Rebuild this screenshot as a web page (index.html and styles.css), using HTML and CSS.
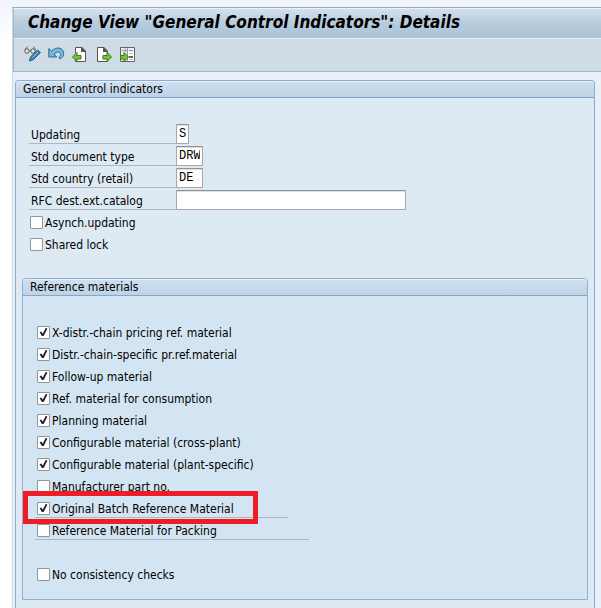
FILE: index.html
```html
<!DOCTYPE html>
<html lang="en">
<head>
    <meta charset="UTF-8">
    <meta name="viewport" content="width=device-width, initial-scale=1.0">
    <title>Change View "General Control Indicators": Details</title>
    <link rel="stylesheet" href="styles.css">
</head>
<body>
    <div class="window">
        <header class="titlebar">
            <h1>Change View "General Control Indicators": Details</h1>
        </header>
        <div class="toolbar">
            <button type="button" class="tool" aria-label="Display / Change">
                <svg width="18" height="18" viewBox="0 0 18 18" fill="none">
                    <path d="M1 4.500L3.500 1.500M5.500 5.500h1.500M11.500 4.500L9.500 1.500" stroke="#666"/>
                    <circle cx="3" cy="6" r="2.200" fill="#e4ebf0" stroke="#555"/>
                    <circle cx="9" cy="6" r="2.200" fill="#e4ebf0" stroke="#555"/>
                    <path d="M5.500 16l1-4L13.500 5l3 2.500-7 7z" fill="#3f87b5" stroke="#235e88"/>
                    <path d="M8.500 12.500l5.500-5.500" stroke="#8fc4e2"/>
                </svg>
            </button>
            <button type="button" class="tool" aria-label="Undo">
                <svg width="18" height="18" viewBox="0 0 18 18" fill="none">
                    <path d="M.8 3.500v8.500h8L6 9C8.500 6 12.500 6.500 12.500 9.500c0 1.500-.8 2.500-1.800 3.500l2 .5c2-1.200 3-2.500 3-4.800C15.700 2.500 8.500 1 3.500 6z" fill="#79b6d8" stroke="#286b96"/>
                </svg>
            </button>
            <button type="button" class="tool" aria-label="Previous entry">
                <svg width="18" height="18" viewBox="0 0 18 18">
                    <path d="M3.500 8V2.500h6l4 4v10h-10V14" fill="#fff" stroke="#555"/>
                    <path d="M9 2h1l4 4v1H9z" fill="#555"/>
                    <path d="M.5 12L5 7.500v3h4v3.500H5v2.500z" fill="#80be2c" stroke="#3d762b"/>
                </svg>
            </button>
            <button type="button" class="tool" aria-label="Next entry">
                <svg width="18" height="18" viewBox="0 0 18 18">
                    <path d="M1.500 2.500h6l4 4v10h-10z" fill="#fff" stroke="#555"/>
                    <path d="M7 2h1l4 4v1H7z" fill="#555"/>
                    <path d="M15.500 12L11 7.500v3H7v3.500h4v2.500z" fill="#80be2c" stroke="#3d762b"/>
                </svg>
            </button>
            <button type="button" class="tool" aria-label="Other entry">
                <svg width="18" height="18" viewBox="0 0 18 18" fill="none">
                    <path d="M.5 2.500h14v14H.5z" fill="#e9eef1" stroke="#666"/>
                    <path d="M8 7h6v9H8z" fill="#fff"/>
                    <path d="M2 5.500h4M4.500 3.500l2 2-2 2M9 5.500h4M7.500 3v13" stroke="#999"/>
                    <path d="M9 8.500h4M9 14.500h4" stroke="#bbb"/>
                    <path d="M9 12h4" stroke="#398043" stroke-width="2"/>
                    <path d="M8.500 12L4 7.500v3H.5v3.500H4v2.500z" fill="#80be2c" stroke="#3d762b"/>
                </svg>
            </button>
        </div>

        <main>
            <form class="group">
                <h2 class="group-title">General control indicators</h2>
                <div class="group-body">
                    <div class="field">
                        <label for="updating">Updating</label>
                        <input type="text" id="updating" class="len-1" value="S">
                    </div>
                    <div class="field">
                        <label for="doctype">Std document type</label>
                        <input type="text" id="doctype" class="len-3" value="DRW">
                    </div>
                    <div class="field">
                        <label for="country">Std country (retail)</label>
                        <input type="text" id="country" class="len-3" value="DE">
                    </div>
                    <div class="field">
                        <label for="rfc">RFC dest.ext.catalog</label>
                        <input type="text" id="rfc" class="len-32">
                    </div>
                    <div class="check"><input type="checkbox" id="asynch"><label for="asynch">Asynch.updating</label></div>
                    <div class="check"><input type="checkbox" id="lock"><label for="lock">Shared lock</label></div>

                    <section class="group subgroup">
                        <h2 class="group-title">Reference materials</h2>
                        <div class="group-body">
                            <div class="check"><input type="checkbox" id="m1" checked><label for="m1">X-distr.-chain pricing ref. material</label></div>
                            <div class="check"><input type="checkbox" id="m2" checked><label for="m2">Distr.-chain-specific pr.ref.material</label></div>
                            <div class="check"><input type="checkbox" id="m3" checked><label for="m3">Follow-up material</label></div>
                            <div class="check"><input type="checkbox" id="m4" checked><label for="m4">Ref. material for consumption</label></div>
                            <div class="check"><input type="checkbox" id="m5" checked><label for="m5">Planning material</label></div>
                            <div class="check"><input type="checkbox" id="m6" checked><label for="m6">Configurable material (cross-plant)</label></div>
                            <div class="check"><input type="checkbox" id="m7" checked><label for="m7">Configurable material (plant-specific)</label></div>
                            <div class="check"><input type="checkbox" id="m8"><label for="m8">Manufacturer part no.</label></div>
                            <div class="check lined marked"><input type="checkbox" id="m9" checked><label for="m9">Original Batch Reference Material</label></div>
                            <div class="check lined lined-long"><input type="checkbox" id="m10"><label for="m10">Reference Material for Packing</label></div>
                            <div class="check spaced"><input type="checkbox" id="m11"><label for="m11">No consistency checks</label></div>
                        </div>
                    </section>
                </div>
            </form>
        </main>
    </div>
</body>
</html>
```
FILE: styles.css
```css
*,
*::before,
*::after {
    box-sizing: border-box;
}
body {
    margin: 0;
    padding: 7px 0 0 12px;
    min-height: 100vh;
    display: flex;
    background: linear-gradient(#f0f4fb, #fff 40px);
    font-family: Tahoma, "DejaVu Sans Condensed", "DejaVu Sans", sans-serif;
    font-stretch: condensed;
    font-size: 12px;
    color: #000;
}
.window {
    flex: 1;
    display: flex;
    flex-direction: column;
    background: #e8eff6;
    border-top: 1px solid #98a9c0;
    border-left: 1px solid #ccd8e2;
}
.titlebar {
    height: 31px;
    padding: 0 14px;
    display: flex;
    align-items: center;
    background: linear-gradient(#d3e1ed, #b6cbdc 50%, #abc3da);
    border-top: 1px solid #eaf1f7;
    border-bottom: 1px solid #e6eef5;
    border-left: 1px solid #a0b5ca;
}
h1 {
    margin: 0;
    padding-bottom: 4px;
    font-size: 17px;
    font-style: italic;
    font-weight: bold;
    white-space: nowrap;
}
.toolbar {
    height: 33px;
    padding: 0 10px 3px;
    display: flex;
    align-items: center;
    gap: 6px;
    background: #cfdce6;
    border-bottom: 1px solid #a3b6c8;
    border-left: 1px solid #a0b5ca;
}
.tool {
    width: 18px;
    height: 18px;
    padding: 0;
    border: 0;
    background: none;
    cursor: pointer;
}
.tool svg {
    display: block;
}
main {
    flex: 1;
    display: flex;
    padding: 8px 6px 0 2px;
}
.group {
    flex: 1;
    margin: 0;
    background: #deeaf3;
    border: 1px solid #8aaccd;
    border-bottom: 0;
    border-radius: 4px 4px 0 0;
}
.group-title {
    margin: 0;
    height: 17px;
    padding-left: 7px;
    font-size: 12px;
    font-weight: normal;
    line-height: 15px;
    background: linear-gradient(#cfdfee, #bdd3e8);
    border-top: 1px solid #e6f0f9;
    border-bottom: 1px solid #87a5c7;
    border-radius: 3px 3px 0 0;
}
.group-body {
    padding: 25px 6px 0;
}
.field {
    display: flex;
    align-items: center;
    height: 22px;
    padding-left: 7px;
}
.field label {
    width: 147px;
    height: 20px;
    padding-left: 2px;
    line-height: 22px;
    border-bottom: 1px solid #b3b6b9;
}
input[type="text"] {
    height: 20px;
    padding: 0 2px;
    font: 12px "Courier New", "Liberation Mono", monospace;
    background: #fff;
    border: 1px solid #a8a8ac;
    border-top-color: #8f9196;
    border-radius: 1px;
    box-shadow: inset 0 1px 1px #ddd;
    outline: none;
}
.len-1 {
    width: 13px;
}
.len-3 {
    width: 27px;
}
.len-32 {
    width: 230px;
}
.check {
    position: relative;
    display: flex;
    align-items: center;
    gap: 2px;
    height: 22px;
    padding-left: 8px;
}
.check label {
    line-height: 22px;
    padding-top: 1px;
}
input[type="checkbox"] {
    appearance: none;
    display: grid;
    place-items: center;
    width: 13px;
    height: 13px;
    margin: 0;
    background: #fff;
    border: 1px solid #929498;
    border-radius: 1px;
}
input[type="checkbox"]:checked::before {
    content: "";
    width: 9px;
    height: 9px;
    background: #25232f;
    clip-path: polygon(6% 52%, 24% 44%, 42% 66%, 74% 6%, 94% 10%, 52% 94%, 32% 94%);
}
.subgroup {
    margin-top: 23px;
    background: #d3e5f2;
    border: 1px solid #94aecf;
}
.subgroup .group-body {
    padding: 25px 6px 14px;
}
.lined::after {
    content: "";
    position: absolute;
    left: 6px;
    bottom: 1px;
    width: 253px;
    border-bottom: 1px solid #b3b6b9;
}
.lined-long::after {
    width: 274px;
}
/* red frame around the indicator to maintain */
.marked::before {
    content: "";
    position: absolute;
    z-index: 1;
    top: -6px;
    left: -6px;
    width: 235px;
    height: 33px;
    border: 5px solid #ee1c25;
    pointer-events: none;
}
.spaced {
    margin-top: 22px;
}
```
